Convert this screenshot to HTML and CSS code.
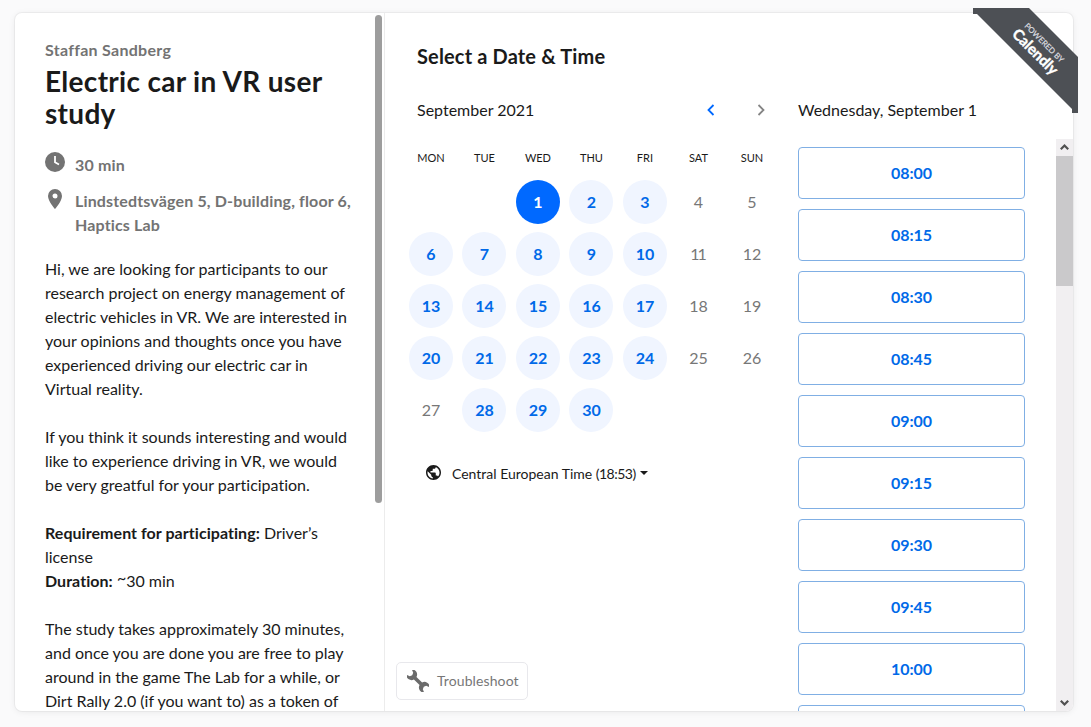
FILE: index.html
```html
<!DOCTYPE html>
<html lang="en">
<head>
<meta charset="utf-8">
<title>Electric car in VR user study</title>
<link rel="stylesheet" href="styles.css">
</head>
<body>
<main class="card">
  <section class="info">
    <div class="info-content">
      <div class="host">Staffan Sandberg</div>
      <h1 class="title">Electric car in VR user<br>study</h1>
      <div class="detail duration">
        <svg class="detail-icon" viewBox="0 0 20 20"><circle cx="10" cy="10" r="10" fill="#737373"/><path d="M10 4v6.300l4 2.200" fill="none" stroke="#fff" stroke-width="1.800"/></svg>
        <span>30 min</span>
      </div>
      <div class="detail location">
        <svg class="detail-icon" viewBox="0 0 20 20"><path fill="#737373" fill-rule="evenodd" d="M10 0a7 7 0 0 0-7 7c0 5.200 7 13 7 13s7-7.800 7-13a7 7 0 0 0-7-7zm0 4.500a2.500 2.500 0 1 1 0 5 2.500 2.500 0 0 1 0-5z"/></svg>
        <span>Lindstedtsvägen 5, D-building, floor 6,<br>Haptics Lab</span>
      </div>
      <div class="description">
        <p>Hi, we are looking for participants to our<br>research project on energy management of<br>electric vehicles in VR. We are interested in<br>your opinions and thoughts once you have<br>experienced driving our electric car in<br>Virtual reality.</p>
        <p>If you think it sounds interesting and would<br>like to experience driving in VR, we would<br>be very greatful for your participation.</p>
        <p><b>Requirement for participating:</b> Driver’s<br>license<br><b>Duration:</b> <span class="tilde">~</span>30 min</p>
        <p>The study takes approximately 30 minutes,<br>and once you are done you are free to play<br>around in the game The Lab for a while, or<br>Dirt Rally 2.0 (if you want to) as a token of</p>
      </div>
    </div>
    <div class="info-scroll"></div>
  </section>

  <section class="booking">
    <div class="calendar-side">
      <h2 class="heading">Select a Date &amp; Time</h2>
      <div class="month">
        <span class="month-name">September 2021</span>
        <svg class="arrow" viewBox="0 0 8 12"><path d="M6.500 1 1.500 6l5 5" fill="none" stroke="#0069ff" stroke-width="1.800"/></svg>
        <svg class="arrow" viewBox="0 0 8 12"><path d="m1.500 1 5 5-5 5" fill="none" stroke="#858585" stroke-width="1.800"/></svg>
      </div>
      <div class="weekdays"><span>MON</span><span>TUE</span><span>WED</span><span>THU</span><span>FRI</span><span>SAT</span><span>SUN</span></div>
      <div class="days">
        <i></i><i></i><b class="selected">1</b><b>2</b><b>3</b><span>4</span><span>5</span>
        <b>6</b><b>7</b><b>8</b><b>9</b><b>10</b><span class="narrow">11</span><span>12</span>
        <b>13</b><b>14</b><b>15</b><b>16</b><b>17</b><span>18</span><span>19</span>
        <b>20</b><b>21</b><b>22</b><b>23</b><b>24</b><span>25</span><span>26</span>
        <span>27</span><b>28</b><b>29</b><b>30</b>
      </div>
      <div class="timezone">
        <svg class="globe" viewBox="2 2 20 20"><path fill="#1a1a1a" d="M12 2C6.480 2 2 6.480 2 12s4.480 10 10 10 10-4.480 10-10S17.520 2 12 2zm-1 17.930c-3.950-.49-7-3.850-7-7.930 0-.62.08-1.210.21-1.790L9 15v1c0 1.100.9 2 2 2v1.930zm6.900-2.540c-.26-.81-1-1.390-1.900-1.390h-1v-3c0-.55-.45-1-1-1H8v-2h2c.55 0 1-.45 1-1V7h2c1.100 0 2-.9 2-2v-.41c2.930 1.190 5 4.060 5 7.410 0 2.080-.8 3.970-2.100 5.390z"/></svg>
        <span class="timezone-name">Central European Time <span class="clock">(18:53)</span></span>
        <span class="caret"></span>
      </div>
      <div class="troubleshoot">
        <svg class="wrench" viewBox="0 0 22 22"><g transform="rotate(45 11 11)"><path fill="#6b6b6b" d="M-1.500 7.200A5 5 0 0 1 7 9.200h8a5 5 0 0 1 8.500-2l-3.300 1.400-1 2.400 1 2.400 3.300 1.400a5 5 0 0 1-8.500-2H7a5 5 0 0 1-8.500 2l3.300-1.400 1-2.400-1-2.400z"/></g></svg>
        <span>Troubleshoot</span>
      </div>
    </div>

    <div class="times-side">
      <div class="chosen-date">Wednesday, September 1</div>
      <div class="times-view">
        <div class="times">
          <div class="time">08:00</div><div class="time">08:15</div><div class="time">08:30</div><div class="time">08:45</div><div class="time">09:00</div><div class="time">09:15</div><div class="time">09:30</div><div class="time">09:45</div><div class="time">10:00</div><div class="time"></div>
        </div>
        <div class="times-scroll">
          <svg class="scroll-button" viewBox="0 0 17 17"><path d="m4.800 10.200 3.700-3.700 3.700 3.700" fill="none" stroke="#505050" stroke-width="2.200"/></svg>
          <div class="thumb"></div>
          <svg class="scroll-button bottom" viewBox="0 0 17 17"><path d="m4.800 6.800 3.700 3.700 3.700-3.700" fill="none" stroke="#505050" stroke-width="2.200"/></svg>
        </div>
      </div>
    </div>
  </section>
</main>
<div class="ribbon">
  <div class="ribbon-text"><span class="powered">POWERED BY</span><span class="brand">Calendly</span></div>
</div>
</body>
</html>
```
FILE: styles.css
```css
* { box-sizing: border-box; }
body {
  margin: 0;
  height: 727px;
  padding: 13px 18px 16px 15px;
  overflow: hidden;
  position: relative;
  background: #fafafb;
  color: #1a1a1a;
  font-family: Lato, "Open Sans", sans-serif;
  font-size: 16px;
  line-height: 24px;
  font-variant-ligatures: none;
}
svg { display: block; flex: none; }
p, h1, h2 { margin: 0; }
.card {
  display: flex;
  height: 698px;
  background: #fff;
  border-radius: 7px;
  box-shadow: 0 0 0 1px rgba(0, 0, 0, .04), 0 1px 7px rgba(0, 0, 0, .07);
  overflow: hidden;
}
.info {
  display: flex;
  justify-content: space-between;
  width: 370px;
  flex: none;
  border-right: 1px solid #ececec;
  overflow: hidden;
}
.info-content { padding: 25px 0 0 30px; white-space: nowrap; }
.info-scroll { width: 7px; height: 488px; margin: 2px 2px 0 0; border-radius: 4px; background: #9d9d9d; flex: none; }
.host { color: #737373; font-weight: 700; letter-spacing: .28px; }
.title { margin-top: 3px; font-size: 28px; line-height: 32px; font-weight: 700; letter-spacing: .3px; }
.detail { display: flex; gap: 10px; color: #737373; font-weight: 700; letter-spacing: .15px; }
.detail-icon { width: 20px; height: 20px; }
.duration { margin-top: 24px; }
.duration .detail-icon { margin-top: -1px; }
.location { margin-top: 12px; }
.location .detail-icon { margin-top: 0; }
.description { margin-top: 20px; }
.description p { margin-bottom: 24px; }
.description b { letter-spacing: .05px; }
.tilde { position: relative; top: -3px; }

.booking { display: flex; flex: 1; }
.calendar-side { display: flex; flex-direction: column; width: 413px; padding-top: 29px; flex: none; }
.heading { margin-left: 32px; font-size: 20px; line-height: 28px; font-weight: 700; letter-spacing: .15px; }
.month { display: flex; align-items: center; margin: 28px 0 0 32px; width: 348px; height: 24px; }
.month-name { flex: 1; }
.arrow { width: 8px; height: 12px; }
.arrow + .arrow { margin-left: 42px; }
.weekdays, .days { display: grid; grid-template-columns: repeat(7, 53.5px); margin-left: 19.200px; justify-items: center; text-align: center; }
.weekdays { margin-top: 28px; height: 16px; font-size: 11px; line-height: 16px; }
.days { margin-top: 10px; grid-auto-rows: 52px; align-items: center; height: 260px; }
.days b, .days span { width: 44px; height: 44px; line-height: 44px; }
.days b { border-radius: 50%; background: #f0f5ff; color: #0069e8; font-weight: 700; }
.days span { color: #777; }
.days .narrow { letter-spacing: -2px; text-indent: -2px; }
.days .selected { background: #0069ff; color: #fff; }
.timezone { display: flex; align-items: center; margin: 26px 0 0 41px; height: 24px; font-size: 14px; }
.globe { width: 15px; height: 15px; margin-bottom: 3px; }
.timezone-name { margin-left: 11px; }
.clock { letter-spacing: -.5px; }
.caret { margin: -3px 0 0 4px; border: 4px solid transparent; border-top: 4px solid #1a1a1a; border-bottom: 0; }
.troubleshoot { display: flex; align-items: center; gap: 8px; width: 132px; height: 38px; margin: auto 0 11px 11px; padding-left: 10px; border: 1px solid #e8e8ec; border-radius: 5px; color: #777; font-size: 14px; letter-spacing: .1px; }
.wrench { width: 22px; height: 22px; }

.times-side { display: flex; flex-direction: column; flex: 1; padding-top: 85px; }
.chosen-date { height: 24px; }
.times-view { display: flex; justify-content: space-between; flex: 1; margin-top: 17px; min-height: 0; overflow: hidden; }
.times { display: flex; flex-direction: column; gap: 10px; padding-top: 8px; width: 227px; }
.time { flex: none; height: 52px; border: 1px solid #80afe4; border-radius: 4px; color: #0069e8; font-weight: 700; line-height: 49px; text-align: center; }
.times-scroll { display: flex; flex-direction: column; width: 17px; background: #f1eff1; }
.scroll-button { width: 17px; height: 17px; }
.thumb { height: 130px; background: #cac9cb; }
.bottom { margin-top: auto; }

.ribbon {
  position: absolute;
  left: 973px;
  top: 8px;
  width: 105px;
  height: 105px;
  background: #4d5055;
  clip-path: polygon(0 0, 56px 0, 105px 49px, 105px 105px, 99px 105px, 99px 101px, 4px 6px, 0 6px);
}
.ribbon-text {
  position: absolute;
  left: 25px;
  top: 28px;
  width: 80px;
  height: 26px;
  display: flex;
  flex-direction: column;
  align-items: center;
  color: #fff;
  transform: rotate(45deg);
}
.powered { font-size: 8px; line-height: 9px; color: #dedfe1; -webkit-text-stroke: .2px #dedfe1; }
.brand { font-size: 15px; line-height: 15px; font-weight: 700; -webkit-text-stroke: .4px #fff; }
```
